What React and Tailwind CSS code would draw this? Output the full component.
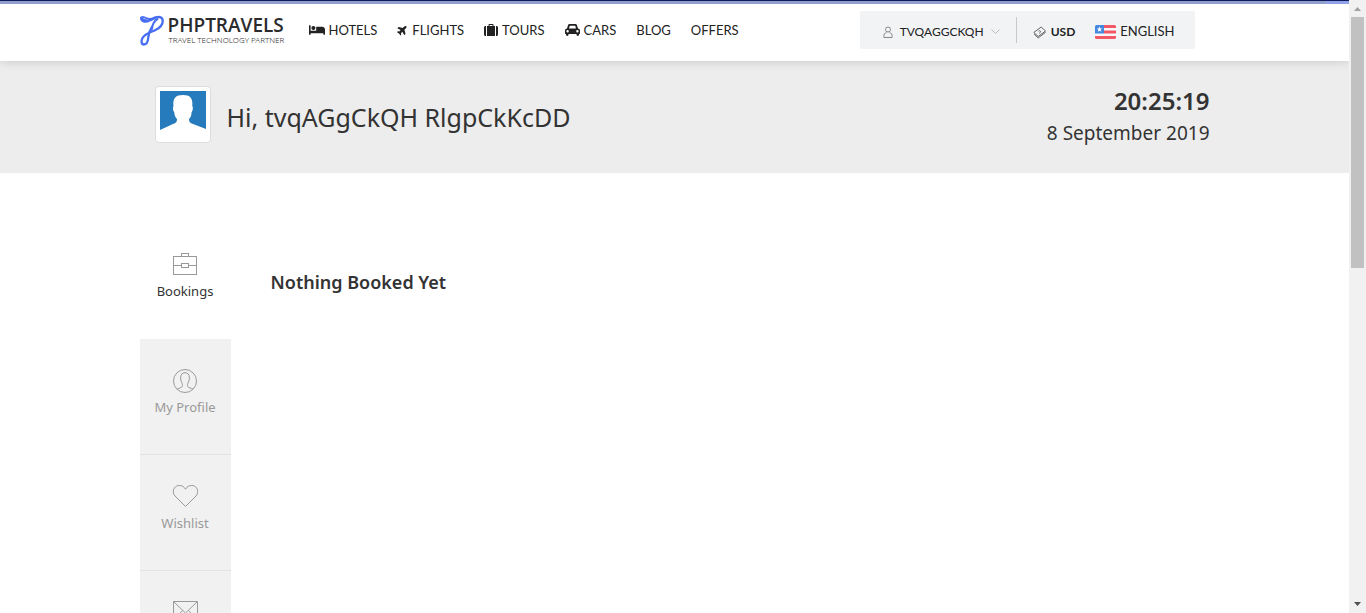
import React from "react";
import { FaBed } from "react-icons/fa";
import { FaPlane } from "react-icons/fa6";

function SuitcaseIcon() {
  return (
    <svg viewBox="0 0 14 12" className="h-3 w-3.5" fill="#222">
      <path d="M4.500 2V1c0-.6.4-1 1-1h3c.6 0 1 .4 1 1v1H11v10H3V2zM5.500 2h3V1h-3zM2 2v10h-.5C.7 12 0 11.300 0 10.500v-7C0 2.700.7 2 1.500 2zM12 2h.5c.8 0 1.500.7 1.500 1.500v7c0 .8-.7 1.500-1.500 1.500H12z" fillRule="evenodd" />
    </svg>
  );
}

function CarIcon() {
  return (
    <svg viewBox="0 0 15 12" className="h-3 w-[15px]" fill="#222">
      <path d="M2 4.500 3 1.300C3.200.5 3.900 0 4.700 0h5.600c.8 0 1.500.5 1.700 1.300l1 3.200c1.100 0 2 .9 2 2v3.100c0 .3-.2.4-.4.400H14v.8c0 .7-.5 1.200-1.200 1.200s-1.300-.5-1.300-1.200V10h-8v.8c0 .7-.5 1.200-1.200 1.200S1 11.500 1 10.800V10H.4C.2 10 0 9.900 0 9.600V6.500c0-1.100.9-2 2-2zm2 0h7l-.7-2.600c0-.1-.1-.2-.3-.2H5c-.2 0-.3.1-.3.2zM2.600 8.500a1.200 1.200 0 1 0 0-2.400 1.200 1.200 0 0 0 0 2.400zm9.800 0a1.200 1.200 0 1 0 0-2.400 1.200 1.200 0 0 0 0 2.400z" fillRule="evenodd" />
    </svg>
  );
}

const navItems = [
  { label: "HOTELS", icon: <FaBed className="h-4 w-4" /> },
  { label: "FLIGHTS", icon: <FaPlane className="h-3 w-[11px] -rotate-45" /> },
  { label: "TOURS", icon: <SuitcaseIcon /> },
  { label: "CARS", icon: <CarIcon /> },
  { label: "BLOG" },
  { label: "OFFERS" },
];

function Logo() {
  return (
    <a href="#" className="flex items-start" aria-label="PHPTRAVELS">
      <svg viewBox="0 0 24 32" className="h-8 w-6" fill="none" stroke="#466df2" strokeLinecap="round" strokeLinejoin="round">
        <path d="M8.500 7.500C5 8.500 1.200 7.500.9 4.700.8 2.800 2.500 2.500 4.200 3.300 7 5.200 11 5.500 15 3.300" strokeWidth="1.800" />
        <path d="M1.200 4C3.500 7.500 9.500 7.500 14 4.500c4-2.700 8.500-1.500 8.700 2 .2 4.500-3.200 7.500-7.200 9.500C11 18.200 5 19.500 2.500 24c-1.500 2.700-1.300 6.500 1.500 6.500 3.500 0 4-3.500 4.300-7C8.700 18.500 10 16 12 13" strokeWidth="2.300" />
        <path d="M17.500 5c-3 1.500-5.500 6-5.500 10" strokeWidth="2" />
      </svg>
      <span className="ml-1 flex flex-col text-[#2b2b2d]">
        <span className="font-['Open_Sans',sans-serif] text-[19px] leading-[22px] font-semibold">PHPTRAVELS</span>
        <span className="pl-px font-['Noto_Sans',sans-serif] text-[8px] leading-2 font-light whitespace-nowrap text-[#333]">TRAVEL TECHNOLOGY PARTNER</span>
      </span>
    </a>
  );
}

function FlagIcon() {
  return (
    <svg viewBox="0 0 21 14" className="h-3.5 w-[21px]">
      <rect width="21" height="14" rx="1.500" fill="#f8f8fa" />
      <path d="M9 0h10.500A1.500 1.500 0 0 1 21 1.500V3H9zM9 5.500h12v3H9zM0 11h21v1.500a1.500 1.500 0 0 1-1.500 1.500h-18A1.500 1.500 0 0 1 0 12.500z" fill="#f35866" />
      <path d="M1.500 0H9v8.500H0v-7A1.500 1.500 0 0 1 1.500 0z" fill="#4387df" />
      <path d="m4.500 1.500.8 1.900 2 .1-1.600 1.300.6 2-1.800-1.100-1.800 1.100.6-2-1.600-1.300 2-.1z" fill="#fff" />
    </svg>
  );
}

function UserIcon() {
  return (
    <svg viewBox="0 0 10 13" className="h-[13px] w-2.5" fill="none" stroke="#8a8a8a">
      <circle cx="5" cy="3.500" r="2.500" />
      <path d="M3.500 6.500C1.500 7 .9 8.500.9 10.500v1h8.200v-1c0-2-.6-3.500-2.600-4" />
    </svg>
  );
}

function MoneyIcon() {
  return (
    <svg viewBox="0 0 14 13" className="h-[13px] w-3.5" fill="none" stroke="#555" strokeWidth=".9">
      <path d="M.8 6.500 8.200 1l4.300 4L5.200 10.500zM1.200 8.200l4 3.800 7.500-5.800" />
      <path d="M5.500 5.200c.8-.8 2-.5 2 .4S6 7 6.600 7.500" />
    </svg>
  );
}

function BriefcaseIcon() {
  return (
    <svg viewBox="0 0 26 24" className="h-6 w-[26px]" fill="none" stroke="currentColor" shapeRendering="crispEdges">
      <path d="M1.500 3.500h23v18h-23zM9.500 3.500v-3h7v3M1.500 12.500h8m7 0h8M9.500 10.500h7v4h-7z" />
    </svg>
  );
}

function ProfileIcon() {
  return (
    <svg viewBox="0 0 26 24" className="h-6 w-[26px]" fill="none" stroke="currentColor">
      <circle cx="13" cy="12" r="11.500" />
      <path d="M5 20.200c2-1.200 4.500-1.500 5.200-2.600.6-1 .2-3-.4-3.900C9 12.300 8.600 10.500 8.600 8.800c0-3.200 1.500-5.100 4.400-5.100s4.400 1.900 4.400 5.100c0 1.700-.4 3.500-1.200 4.900-.6.900-1 2.900-.4 3.900.7 1.100 3.200 1.400 5.200 2.600" />
    </svg>
  );
}

function HeartIcon() {
  return (
    <svg viewBox="0 0 26 24" className="h-6 w-[26px]" fill="none" stroke="currentColor">
      <path d="M13.500 21.500 3 11C-.2 7.500 1.200.5 7.200.5c3 0 4.900 1.200 6.300 3.700C14.900 1.700 16.800.5 19.800.5c6 0 7.400 7 4.200 10.500z" />
    </svg>
  );
}

function MailIcon() {
  return (
    <svg viewBox="0 0 26 24" className="h-6 w-[26px]" fill="none" stroke="currentColor">
      <path d="M1.500.5h24v19h-24zM1.500.5l12 11.500 12-11.500M1.500 19.500l9-10m15 10-9-10" />
    </svg>
  );
}

const sideItems = [
  { label: "Bookings", icon: <BriefcaseIcon />, active: true },
  { label: "My Profile", icon: <ProfileIcon /> },
  { label: "Wishlist", icon: <HeartIcon /> },
  { name: "Newsletter", icon: <MailIcon /> },
];

function Header() {
  return (
    <header className="relative shrink-0 bg-white font-['Lato','Liberation_Sans',sans-serif] shadow-[0_0_10px_rgba(0,0,0,0.18)]">
      <div className="h-px bg-[#0b1b5e]" />
      <div className="flex h-[3px] justify-end bg-[#929fcd]">
        <div className="w-[23px] bg-[#91a2e8]" />
      </div>
      <div className="mx-auto flex h-[57px] max-w-[1070px] items-start justify-between">
        <div className="flex items-start">
          <div className="w-[169px] pt-2.5">
            <Logo />
          </div>
          <nav className="flex gap-5 pt-4">
            {navItems.map((item) => (
              <a key={item.label} href="#" className="flex items-center gap-1 text-[13px] leading-5 text-[#222]">
                {item.icon}
                {item.label}
              </a>
            ))}
          </nav>
        </div>
        <div className="mt-[7px] mr-[15px] flex h-[38px] items-center rounded-xs bg-[#f1f3f5] pr-5 pl-[23px] text-[#222]">
          <button type="button" className="flex items-center gap-[7px] pt-1 text-xs">
            <UserIcon />
            TVQAGGCKQH
            <svg viewBox="0 0 9 6" className="h-1.5 w-[9px]" fill="none" stroke="#bbb">
              <path d="m.5.5 4 4 4-4" />
            </svg>
          </button>
          <div className="mx-4 h-[26px] w-px bg-[#c8c8c8]" />
          <button type="button" className="flex items-center gap-1 pt-1 text-xs font-bold">
            <MoneyIcon />
            USD
          </button>
          <button type="button" className="ml-5 flex items-center gap-1 pt-1 text-[13px]">
            <FlagIcon />
            ENGLISH
          </button>
        </div>
      </div>
    </header>
  );
}

function Scrollbar() {
  return (
    <div className="flex w-[17px] shrink-0 flex-col items-center justify-between bg-[#f1f1f1]" aria-hidden="true">
      <div className="flex flex-col items-center">
        <svg viewBox="0 0 17 17" className="h-[17px] w-[17px]">
          <path d="m5 11 3.500-4 3.500 4z" fill="#a0a0a0" />
        </svg>
        <div className="h-[251px] w-[13px] bg-[#c1c1c1]" />
      </div>
      <svg viewBox="0 0 17 17" className="h-[17px] w-[17px]">
        <path d="m5 6 3.500 4L12 6z" fill="#505050" />
      </svg>
    </div>
  );
}

export default function App() {
  return (
    <div className="flex h-screen overflow-hidden bg-white font-['Noto_Sans','Liberation_Sans',sans-serif] text-[#333]">
      <div className="flex min-w-0 flex-1 flex-col overflow-hidden">
        <Header />
        <section className="shrink-0 bg-[#ededed]">
          <div className="mx-auto flex h-28 max-w-[1070px] items-start justify-between pl-[15px]">
            <div className="flex items-center pt-[25px]">
              <div className="rounded-sm border border-[#ddd] bg-white p-1">
                <svg viewBox="0 0 46 47" className="h-[47px] w-[46px]" aria-label="Profile photo">
                  <path d="M0 0h46v47H0z" fill="#fff" />
                  <path d="M0 0h46v38l-13-5c-3-1-4-2-4-5 2-2 2.500-4 2.500-6.500 1.500-2 1.800-5 .8-6.500C33 7 30 4 23 4S12.500 7 13.500 15c-1 1.500-.7 4.500.8 6.500.2 2.500.8 4.500 2.700 6.500 0 3-1 4-4 5L0 39z" fill="#257bbb" />
                </svg>
              </div>
              <h1 className="pt-1 pl-4 text-[25px] leading-8">Hi, tvqAGgCkQH RlgpCkKcDD</h1>
            </div>
            <div className="pt-6 text-right">
              <div className="text-2xl leading-8 font-semibold">20:25:19</div>
              <div className="text-[19px] leading-8">8 September 2019</div>
            </div>
          </div>
        </section>
        <main className="mx-auto flex w-full max-w-[1070px] pt-[50px]">
          <nav className="w-[91px] shrink-0">
            {sideItems.map((item) => (
              <a
                key={item.label ?? item.name}
                href="#"
                aria-label={item.name}
                className={
                  item.active
                    ? "flex h-[116px] flex-col items-center bg-white pt-[30px] text-[#333]"
                    : "flex h-[116px] flex-col items-center border-b border-[#e3e3e3] bg-[#f1f1f1] pt-[30px] text-[#999]"
                }
              >
                <span className="text-[#999]">{item.icon}</span>
                {item.label && <span className="pt-1 text-[13px] leading-5">{item.label}</span>}
              </a>
            ))}
          </nav>
          <h2 className="pt-[47px] pl-10 text-lg leading-6 font-semibold">Nothing Booked Yet</h2>
        </main>
      </div>
      <Scrollbar />
    </div>
  );
}
